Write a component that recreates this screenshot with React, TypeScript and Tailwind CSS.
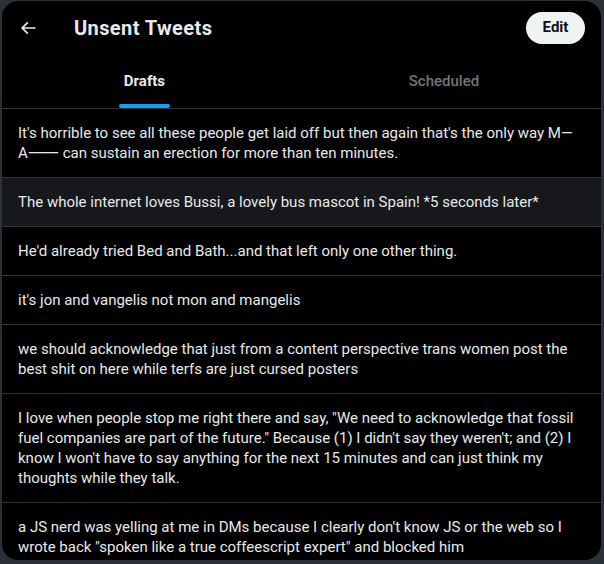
import React from 'react';

const drafts: React.ReactNode[] = [
  <>It's horrible to see all these people get laid off but then again that's the only way M{'\u2014'}<span className="whitespace-nowrap">A<span className="tracking-[-2px]">{'\u2014\u2014'}</span>{'\u2014'}</span> can sustain an erection for more than ten minutes.</>,
  "The whole internet loves Bussi, a lovely bus mascot in Spain! *5 seconds later*",
  "He'd already tried Bed and Bath...and that left only one other thing.",
  "it's jon and vangelis not mon and mangelis",
  "we should acknowledge that just from a content perspective trans women post the best shit on here while terfs are just cursed posters",
  "I love when people stop me right there and say, \"We need to acknowledge that fossil fuel companies are part of the future.\" Because (1) I didn't say they weren't; and (2) I know I won't have to say anything for the next 15 minutes and can just think my thoughts while they talk.",
  "a JS nerd was yelling at me in DMs because I clearly don't know JS or the web so I wrote back \"spoken like a true coffeescript expert\" and blocked him",
];

function BackArrow() {
  return (
    <svg viewBox="0 0 24 24" className="w-5 h-5 fill-[#e7e9ea]">
      <path d="M7.414 13l5.043 5.04-1.414 1.42L3.586 12l7.457-7.46 1.414 1.42L7.414 11H21v2H7.414z" />
    </svg>
  );
}

export default function App() {
  return (
    <div className="w-[604px] h-[564px] bg-[#2b3138] pl-[2px] pt-[1px] overflow-hidden" style={{ fontFamily: 'Roboto, "Noto Sans", sans-serif' }}>
      <div className="w-[599px] h-[559px] bg-black rounded-2xl overflow-hidden flex flex-col text-[#e7e9ea]">
        <div className="h-[53px] flex items-center px-4 flex-shrink-0">
          <BackArrow />
          <div className="ml-9 text-[20px] font-bold leading-6 tracking-[0.4px]">Unsent Tweets</div>
          <button className="ml-auto h-8 w-[59px] rounded-full bg-[#eff3f4] text-[#0f1419] text-[15px] font-bold">Edit</button>
        </div>

        <div className="h-[55px] flex border-b border-[#2f3336] flex-shrink-0">
          <div className="flex-auto px-4 flex flex-col items-center">
            <div className="relative h-full flex items-center">
              <span className="text-[15px] font-bold">Drafts</span>
              <div className="absolute bottom-0 -left-[5px] -right-[5px] h-1 rounded-full bg-[#1d9bf0]" />
            </div>
          </div>
          <div className="flex-auto px-4 flex items-center justify-center">
            <span className="text-[15px] font-medium text-[#71767b]">Scheduled</span>
          </div>
        </div>

        <div className="flex-1 overflow-hidden">
          {drafts.map((text, i) => (
            <div key={i} className={`px-4 py-[14px] border-b border-[#2f3336] text-[15px] leading-5 ${i === 1 ? 'bg-[#16181c]' : ''}`}>
              {text}
            </div>
          ))}
        </div>
      </div>
    </div>
  );
}
